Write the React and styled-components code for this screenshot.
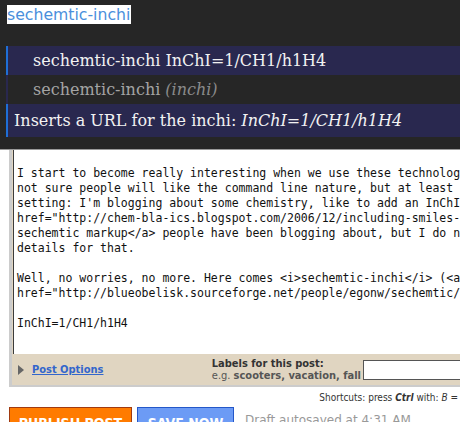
import React from "react";
import styled, { createGlobalStyle } from "styled-components";

const Global = createGlobalStyle`
  html, body { margin: 0; padding: 0; background: #ffffff; }
  body { width: 460px; height: 422px; overflow: hidden; }
`;

const Page = styled.div`
  width: 460px;
  height: 422px;
  overflow: hidden;
  display: flex;
  flex-direction: column;
`;

const Overlay = styled.div`
  background: #262626;
  height: 150px;
  padding-top: 5px;
  box-sizing: border-box;
  border-bottom: 1px solid #9a9a9a;
  flex: none;
`;

const Query = styled.span`
  display: inline-block;
  margin-left: 7px;
  height: 19px;
  line-height: 19px;
  padding: 0 1px 0 0;
  background: #ffffff;
  color: #4a8fdc;
  font-family: "DejaVu Sans", sans-serif;
  font-size: 15.7px;
`;

const List = styled.div`
  margin: 22px 0 0 6px;
  display: flex;
  flex-direction: column;
`;

const Row = styled.div`
  height: ${(p) => p.$h}px;
  box-sizing: border-box;
  display: flex;
  align-items: center;
  padding-left: ${(p) => p.$indent}px;
  background: ${(p) => (p.$active ? "#29284f" : "#262626")};
  border-left: 2px solid ${(p) => (p.$active ? "#1f6fd6" : "#29284f")};
  color: ${(p) => (p.$dim ? "#a4a4a4" : "#f2f2f2")};
  font-family: "DejaVu Serif", serif;
  font-size: 16px;
  white-space: nowrap;
`;

const Em = styled.i`
  color: ${(p) => (p.$dim ? "#8a8a8a" : "inherit")};
  margin-left: 5px;
`;

const Editor = styled.div`
  flex: 1;
  display: flex;
  flex-direction: column;
  background: #ffffff;
`;

const Frame = styled.div`
  margin-left: 9px;
  border-left: 3px solid #cccccc;
  border-bottom: 2px solid #cccccc;
  background: #e0d5c1;
  padding-left: 1px;
  display: flex;
  flex-direction: column;
`;

const TextArea = styled.div`
  background: #ffffff;
  border-left: 1px solid #3c3c3c;
  height: 204px;
  box-sizing: border-box;
  padding: 16px 0 0 3px;
  font-family: "DejaVu Sans Mono", monospace;
  font-size: 11.5px;
  line-height: 15px;
  color: #111111;
  white-space: pre;
  overflow: hidden;
`;

const OptionsBar = styled.div`
  height: 31px;
  display: flex;
  align-items: center;
  font-family: "DejaVu Sans Condensed", "DejaVu Sans", sans-serif;
  font-stretch: condensed;
  font-size: 11px;
`;

const Triangle = styled.span`
  width: 0;
  height: 0;
  margin-left: 5px;
  border-top: 5px solid transparent;
  border-bottom: 5px solid transparent;
  border-left: 6px solid #666666;
`;

const OptionsLink = styled.a`
  margin-left: 8px;
  color: #3366cc;
  font-weight: bold;
  text-decoration: underline;
  font-size: 11px;
`;

const Labels = styled.div`
  margin-left: auto;
  display: flex;
  align-items: center;
  gap: 2px;
`;

const LabelText = styled.div`
  display: flex;
  flex-direction: column;
  line-height: 12px;
  color: #333333;
  font-weight: bold;
`;

const Hint = styled.span`
  color: #555555;
  font-weight: bold;
`;

const Plain = styled.span`
  font-weight: normal;
`;

const LabelInput = styled.div`
  width: 100px;
  height: 20px;
  box-sizing: border-box;
  background: #ffffff;
  border: 1px solid #555555;
  border-right: none;
  margin-right: -3px;
`;

const Shortcuts = styled.div`
  align-self: flex-end;
  margin-top: 5px;
  padding-right: 2px;
  font-family: "DejaVu Sans Condensed", "DejaVu Sans", sans-serif;
  font-stretch: condensed;
  font-size: 10px;
  color: #333333;
  white-space: nowrap;
`;

const Key = styled.b`
  font-style: italic;
`;

const Actions = styled.div`
  margin: 4px 0 0 9px;
  display: flex;
  align-items: flex-start;
  gap: 5px;
`;

const Button = styled.div`
  height: 28px;
  box-sizing: border-box;
  padding: 7px 0 0;
  text-align: center;
  width: ${(p) => p.$w}px;
  background: ${(p) => p.$bg};
  border: 1px solid ${(p) => p.$border};
  color: #ffffff;
  font-family: "DejaVu Sans Condensed", "DejaVu Sans", sans-serif;
  font-stretch: condensed;
  font-weight: bold;
  font-size: 14px;
  line-height: 16px;
`;

const Draft = styled.span`
  margin: 6px 0 0 6px;
  color: #999999;
  font-family: "DejaVu Sans", sans-serif;
  font-size: 12px;
`;

const text = `I start to become really interesting when we use these technologies together. I'm
not sure people will like the command line nature, but at least it works. Consider this
setting: I'm blogging about some chemistry, like to add an InChI to my blog, using the <a
href="http://chem-bla-ics.blogspot.com/2006/12/including-smiles-cml-and-inchi-in-blogs.html">
sechemtic markup</a> people have been blogging about, but I do not want to look up all the
details for that.

Well, no worries, no more. Here comes <i>sechemtic-inchi</i> (<a
href="http://blueobelisk.sourceforge.net/people/egonw/sechemtic/">download</a>):

InChI=1/CH1/h1H4`;

export default function App() {
  return (
    <Page>
      <Global />
      <Overlay>
        <Query>sechemtic-inchi</Query>
        <List>
          <Row $h={29} $indent={25} $active>
            sechemtic-inchi InChI=1/CH1/h1H4
          </Row>
          <Row $h={29} $indent={25} $dim>
            sechemtic-inchi<Em $dim>(inchi)</Em>
          </Row>
          <Row $h={33} $indent={6} $active>
            Inserts a URL for the inchi:<Em>InChI=1/CH1/h1H4</Em>
          </Row>
        </List>
      </Overlay>
      <Editor>
        <Frame>
          <TextArea>{text}</TextArea>
          <OptionsBar>
            <Triangle />
            <OptionsLink>Post Options</OptionsLink>
            <Labels>
              <LabelText>
                <span>Labels for this post:</span>
                <Hint>
                  <Plain>e.g. </Plain>scooters, vacation, fall
                </Hint>
              </LabelText>
              <LabelInput />
            </Labels>
          </OptionsBar>
        </Frame>
        <Shortcuts>
          Shortcuts: press <Key>Ctrl</Key> with: <i>B</i> =
        </Shortcuts>
        <Actions>
          <Button $w={123} $bg="#ff7b00" $border="#a03a10">
            PUBLISH POST
          </Button>
          <Button $w={97} $bg="#6c9bf5" $border="#2457c8">
            SAVE NOW
          </Button>
          <Draft>Draft autosaved at 4:31 AM</Draft>
        </Actions>
      </Editor>
    </Page>
  );
}
